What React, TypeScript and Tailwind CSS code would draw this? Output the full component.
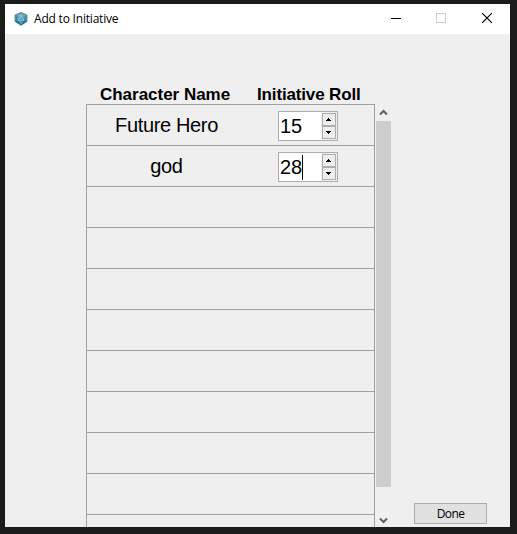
import React from "react";

const ARIAL = "font-['Liberation_Sans',Arial,sans-serif]";

function ShieldIcon() {
  return (
    <svg width="14" height="14" viewBox="0 0 14 14" className="-mt-px block">
      <path d="M7 0.4 13 3v6.4L7 13.4 1 9.400V3Z" fill="#559cb6" stroke="#66828f" strokeWidth="0.9" />
      <path d="M1.500 8.500h11v1L7 13 1.500 9.500Z" fill="#176986" />
      <path d="M7 1.500 3 4.200h8Z" fill="#86afbe" />
      <path d="M7 3.200 3.600 9h6.800Z" fill="#5ba9c6" stroke="#a0cfdf" strokeWidth="0.8" />
      <path d="M2 4 3.500 9 7 11l3.500-2L12 4" fill="none" stroke="#2f7690" strokeWidth="0.7" />
      <path d="M5 10h4L7 12.200Z" fill="#36b6e2" />
    </svg>
  );
}

function Triangle({ down = false }: { down?: boolean }) {
  return (
    <svg width="5" height="3" viewBox="0 0 5 3" shapeRendering="crispEdges" className="block shrink-0">
      {down ? (
        <path d="M0 0h5v1H4v1H3v1H2V2H1V1H0Z" fill="#000" />
      ) : (
        <path d="M2 0h1v1h1v1h1v1H0V2h1V1h1Z" fill="#000" />
      )}
    </svg>
  );
}

function Spinner({ value, active = false }: { value: string; active?: boolean }) {
  const button = "flex h-[13px] w-[14px] items-center border border-[#adadad] bg-[#ededed] pl-[3px]";
  return (
    <div className="flex h-[30px] w-[60px] border border-[#abadb3] bg-white">
      <div className="flex w-[42px] items-center pl-px">
        <span className="text-[20px] leading-[28px]">{value}</span>
        {active && <span className="h-[25px] w-px bg-black" />}
      </div>
      <div className="flex w-4 flex-col bg-[#f0f0f0] p-px">
        <div className={button}>
          <Triangle />
        </div>
        <div className={button}>
          <Triangle down />
        </div>
      </div>
    </div>
  );
}

function Chevron({ down = false }: { down?: boolean }) {
  return (
    <svg width="9" height="7" viewBox="0 0 9 7" className="block">
      <path
        d={down ? "M1 1.500 4.500 5 8 1.500" : "M1 5.500 4.500 2 8 5.500"}
        fill="none"
        stroke="#606060"
        strokeWidth="2"
      />
    </svg>
  );
}

const rows = [
  { name: "Future Hero", roll: "15" },
  { name: "god", roll: "28", active: true },
  ...Array.from({ length: 9 }, () => ({ name: "", roll: "" })),
] as { name: string; roll: string; active?: boolean }[];

export default function App() {
  return (
    <div className="h-[534px] w-[517px] overflow-hidden bg-[#1b1b1b] pt-1 pl-[5px]">
      <div className="flex h-[523px] w-[505px] flex-col overflow-hidden bg-[#efefef] text-black">
        <header className="flex h-[30px] shrink-0 items-center bg-white pl-[9px]">
          <ShieldIcon />
          <span className="ml-[6px] flex-1 whitespace-nowrap font-['Open_Sans','Noto_Sans',sans-serif] text-[12px] leading-[16px] tracking-[-0.2px]">
            Add to Initiative
          </span>
          <div className="mb-[2px] flex items-center pr-[18px]">
            <span className="mr-[35px] h-px w-[10px] bg-black" />
            <span className="mr-[36px] h-[10px] w-[10px] border border-[#cccccc]" />
            <svg width="10" height="10" viewBox="0 0 10 10" className="block">
              <path d="M0 0 10 10M10 0 0 10" stroke="#000" strokeWidth="1.200" />
            </svg>
          </div>
        </header>

        <main className={`flex h-[493px] ${ARIAL}`}>
          <section className="ml-[81px] w-[289px] shrink-0">
            <div className="flex h-[70px] items-end whitespace-nowrap text-[17px] font-bold leading-[18px]">
              <span className="ml-[14px] w-[157px] tracking-[-0.02px]">Character Name</span>
              <span className="tracking-[-0.15px]">Initiative Roll</span>
            </div>
            <div className="h-[423px] overflow-hidden border-x border-t border-[#a0a0a0]">
              {rows.map((row, i) => (
                <div key={i} className="flex h-[41px] items-center border-b border-[#a0a0a0]">
                  <div className="w-[159px] text-center text-[20px] leading-[24px] tracking-[-0.35px]">
                    {row.name}
                  </div>
                  {row.roll && (
                    <div className="ml-8 mt-[2px]">
                      <Spinner value={row.roll} active={row.active} />
                    </div>
                  )}
                </div>
              ))}
            </div>
          </section>

          <div className="ml-px mt-[70px] flex w-[15px] flex-col items-center">
            <div className="flex h-[17px] items-center">
              <Chevron />
            </div>
            <div className="h-[366px] w-full bg-[#cdcdcd]" />
            <div className="mt-[30px]">
              <Chevron down />
            </div>
          </div>

          <button className="ml-[23px] mt-[469px] h-[21px] w-[73px] border border-[#adadad] bg-[#e1e1e1] font-['Open_Sans','Noto_Sans',sans-serif] text-[12px] leading-[19px] tracking-[-0.6px]">
            Done
          </button>
        </main>
      </div>
    </div>
  );
}
